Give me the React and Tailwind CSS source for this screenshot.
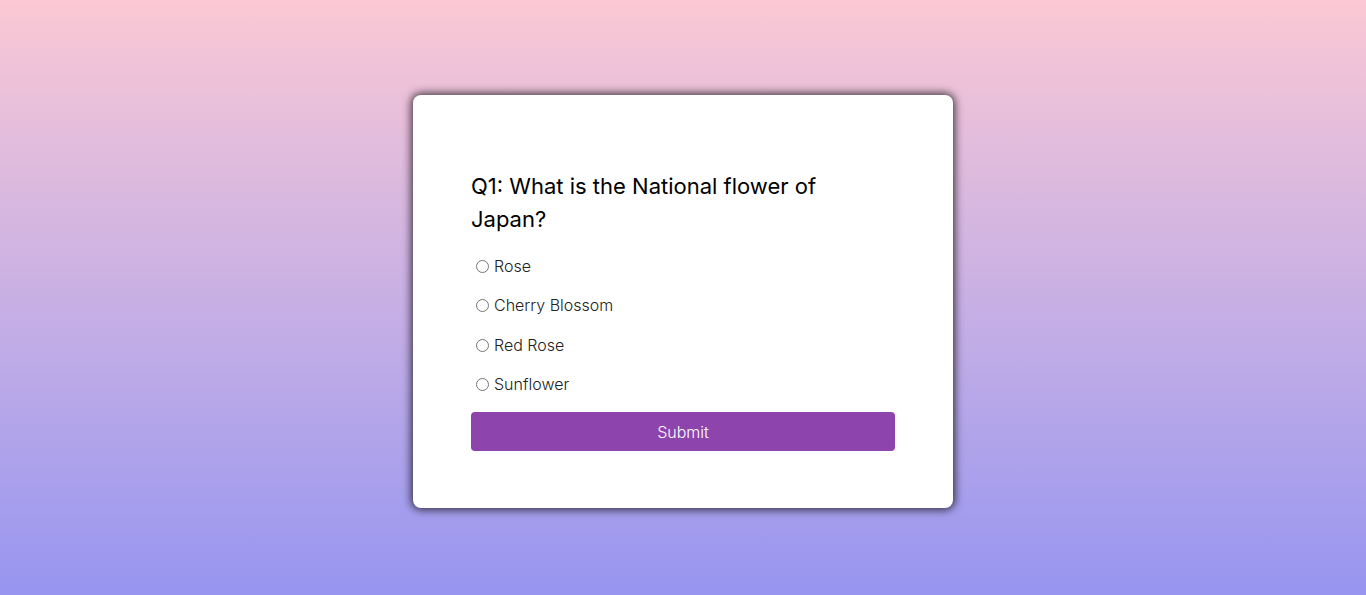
export default function App() {
  const options = ["Rose", "Cherry Blossom", "Red Rose", "Sunflower"];
  return (
    <div
      className="min-h-screen w-full bg-gradient-to-b from-[#fbc8d4] to-[#9795f0] flex justify-center pt-[95px]"
      style={{ fontFamily: "Inter, 'Noto Sans', sans-serif" }}
    >
      <div className="w-[540px] h-[413px] bg-white rounded-[8px] shadow-[0_0_9px_2px_rgba(0,0,0,0.7)] px-[58px] pt-[75px]">
        <h2 className="max-w-[400px] text-[22px] leading-[33px] font-normal text-black">
          Q1: What is the National flower of Japan?
        </h2>
        <ul className="mt-[10px]">
          {options.map((o) => (
            <li key={o} className="h-[39.5px] flex items-center text-[16px] font-light text-[#222]">
              <input type="radio" name="q" className="ml-[5px] mr-[3px] mt-[1px]" />
              <label className="ml-[2px]">{o}</label>
            </li>
          ))}
        </ul>
        <button className="mt-[8px] w-full h-[39px] bg-[#8e44ad] text-white rounded-[4px] text-[16px] font-light">
          Submit
        </button>
      </div>
    </div>
  );
}
